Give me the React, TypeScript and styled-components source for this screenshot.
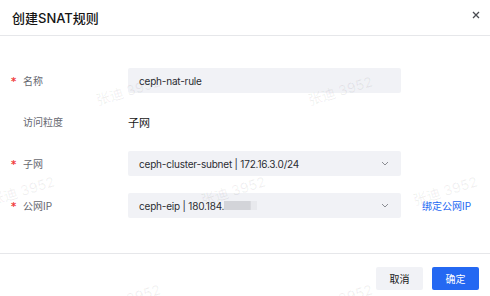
import React from "react";
import styled, { createGlobalStyle } from "styled-components";

const Global = createGlobalStyle`
  html, body { margin: 0; padding: 0; background: #fff; }
  body { font-family: "Inter", "Noto Sans CJK SC", sans-serif; }
`;

const Modal = styled.div`
  position: relative;
  width: 490px;
  height: 296px;
  background: #fff;
  display: flex;
  flex-direction: column;
  overflow: hidden;
`;

const Header = styled.div`
  height: 35px;
  flex: none;
  border-bottom: 1px solid #e6e7ea;
  display: flex;
  align-items: center;
  justify-content: space-between;
  padding: 0 10px 0 12px;
`;

const Title = styled.h1`
  margin: 0;
  font-size: 13px;
  font-weight: 500;
  color: #151515;
`;

const CloseButton = styled.button`
  border: 0;
  background: none;
  padding: 0;
  margin: 0 0 6px 0;
  width: 9px;
  height: 9px;
  display: flex;
  align-items: center;
  justify-content: center;
  cursor: pointer;
`;

const Body = styled.div`
  flex: 1;
  padding-top: 32px;
`;

const Row = styled.div<{ $mb: number }>`
  display: grid;
  grid-template-columns: 117px 273px auto;
  align-items: center;
  height: 25px;
  padding-left: 11px;
  margin-bottom: ${(p) => p.$mb}px;
`;

const Label = styled.div`
  display: flex;
  align-items: center;
  font-size: 10px;
  color: #666870;
`;

const Star = styled.span`
  display: inline-block;
  width: 12px;
  color: #f03a3a;
  font-family: "DejaVu Sans", sans-serif;
  font-weight: 700;
  font-size: 10px;
  line-height: 10px;
  transform: translateY(1px);
`;

const Field = styled.div`
  height: 25px;
  background: #f1f2f6;
  border-radius: 2px;
  display: flex;
  align-items: center;
  justify-content: space-between;
  padding: 0 12px 0 11px;
  box-sizing: border-box;
  font-size: 10px;
  letter-spacing: -0.2px;
  color: #2b2d33;
`;

const FieldText = styled.span`
  display: flex;
  align-items: center;
  white-space: nowrap;
`;

const Masked = styled.span`
  display: inline-block;
  width: 33px;
  height: 9px;
  background: linear-gradient(to right, #d3d4d9 0%, #d3d4d9 80%, #e8e9ed 81%, #e8e9ed 100%);
`;

const Value = styled.div`
  font-size: 11px;
  color: #151515;
`;

const Link = styled.a`
  margin-left: 21px;
  font-size: 10px;
  color: #2468f2;
  text-decoration: none;
  cursor: pointer;
`;

const Footer = styled.div`
  height: 43px;
  flex: none;
  box-sizing: border-box;
  border-top: 1px solid #e6e7ea;
  display: flex;
  justify-content: flex-end;
  align-items: flex-start;
  gap: 9px;
  padding: 13px 11px 0 0;
`;

const Button = styled.button<{ $primary?: boolean }>`
  width: 47px;
  height: 23px;
  border: 0;
  border-radius: 2px;
  font-family: inherit;
  font-size: 10px;
  cursor: pointer;
  background: ${(p) => (p.$primary ? "#2468f2" : "#f1f2f6")};
  color: ${(p) => (p.$primary ? "#fff" : "#151515")};
`;

const WatermarkLayer = styled.div`
  position: absolute;
  inset: 0;
  pointer-events: none;
`;

const Mark = styled.span`
  position: absolute;
  transform: translate(-50%, -50%) rotate(-17deg);
  white-space: nowrap;
  font-size: 14px;
  font-weight: 500;
  color: rgba(0, 0, 20, 0.06);
`;

const Chevron = () => (
  <svg width="8" height="5" viewBox="0 0 8 5">
    <polyline points="1,1 4,4 7,1" fill="none" stroke="#8b8d93" strokeWidth="1" />
  </svg>
);

const marks = [
  [128, 90],
  [340, 90],
  [22, 190],
  [233, 190],
  [445, 190],
  [128, 298],
  [340, 298],
];

export default function App() {
  return (
    <>
      <Global />
      <Modal>
        <Header>
          <Title>创建SNAT规则</Title>
          <CloseButton aria-label="close">
            <svg width="8" height="8" viewBox="0 0 8 8">
              <path d="M1 1 L7 7 M7 1 L1 7" stroke="#4a4c52" strokeWidth="1.3" />
            </svg>
          </CloseButton>
        </Header>
        <Body>
          <Row $mb={16}>
            <Label>
              <Star>*</Star>名称
            </Label>
            <Field>
              <FieldText>ceph-nat-rule</FieldText>
            </Field>
          </Row>
          <Row $mb={17}>
            <Label>
              <Star />访问粒度
            </Label>
            <Value>子网</Value>
          </Row>
          <Row $mb={17}>
            <Label>
              <Star>*</Star>子网
            </Label>
            <Field>
              <FieldText>ceph-cluster-subnet | 172.16.3.0/24</FieldText>
              <Chevron />
            </Field>
          </Row>
          <Row $mb={0}>
            <Label>
              <Star>*</Star>公网IP
            </Label>
            <Field>
              <FieldText>
                ceph-eip | 180.184.<Masked />
              </FieldText>
              <Chevron />
            </Field>
            <Link>绑定公网IP</Link>
          </Row>
        </Body>
        <Footer>
          <Button>取消</Button>
          <Button $primary>确定</Button>
        </Footer>
        <WatermarkLayer>
          {marks.map(([x, y], i) => (
            <Mark key={i} style={{ left: x, top: y }}>
              张迪 3952
            </Mark>
          ))}
        </WatermarkLayer>
      </Modal>
    </>
  );
}
